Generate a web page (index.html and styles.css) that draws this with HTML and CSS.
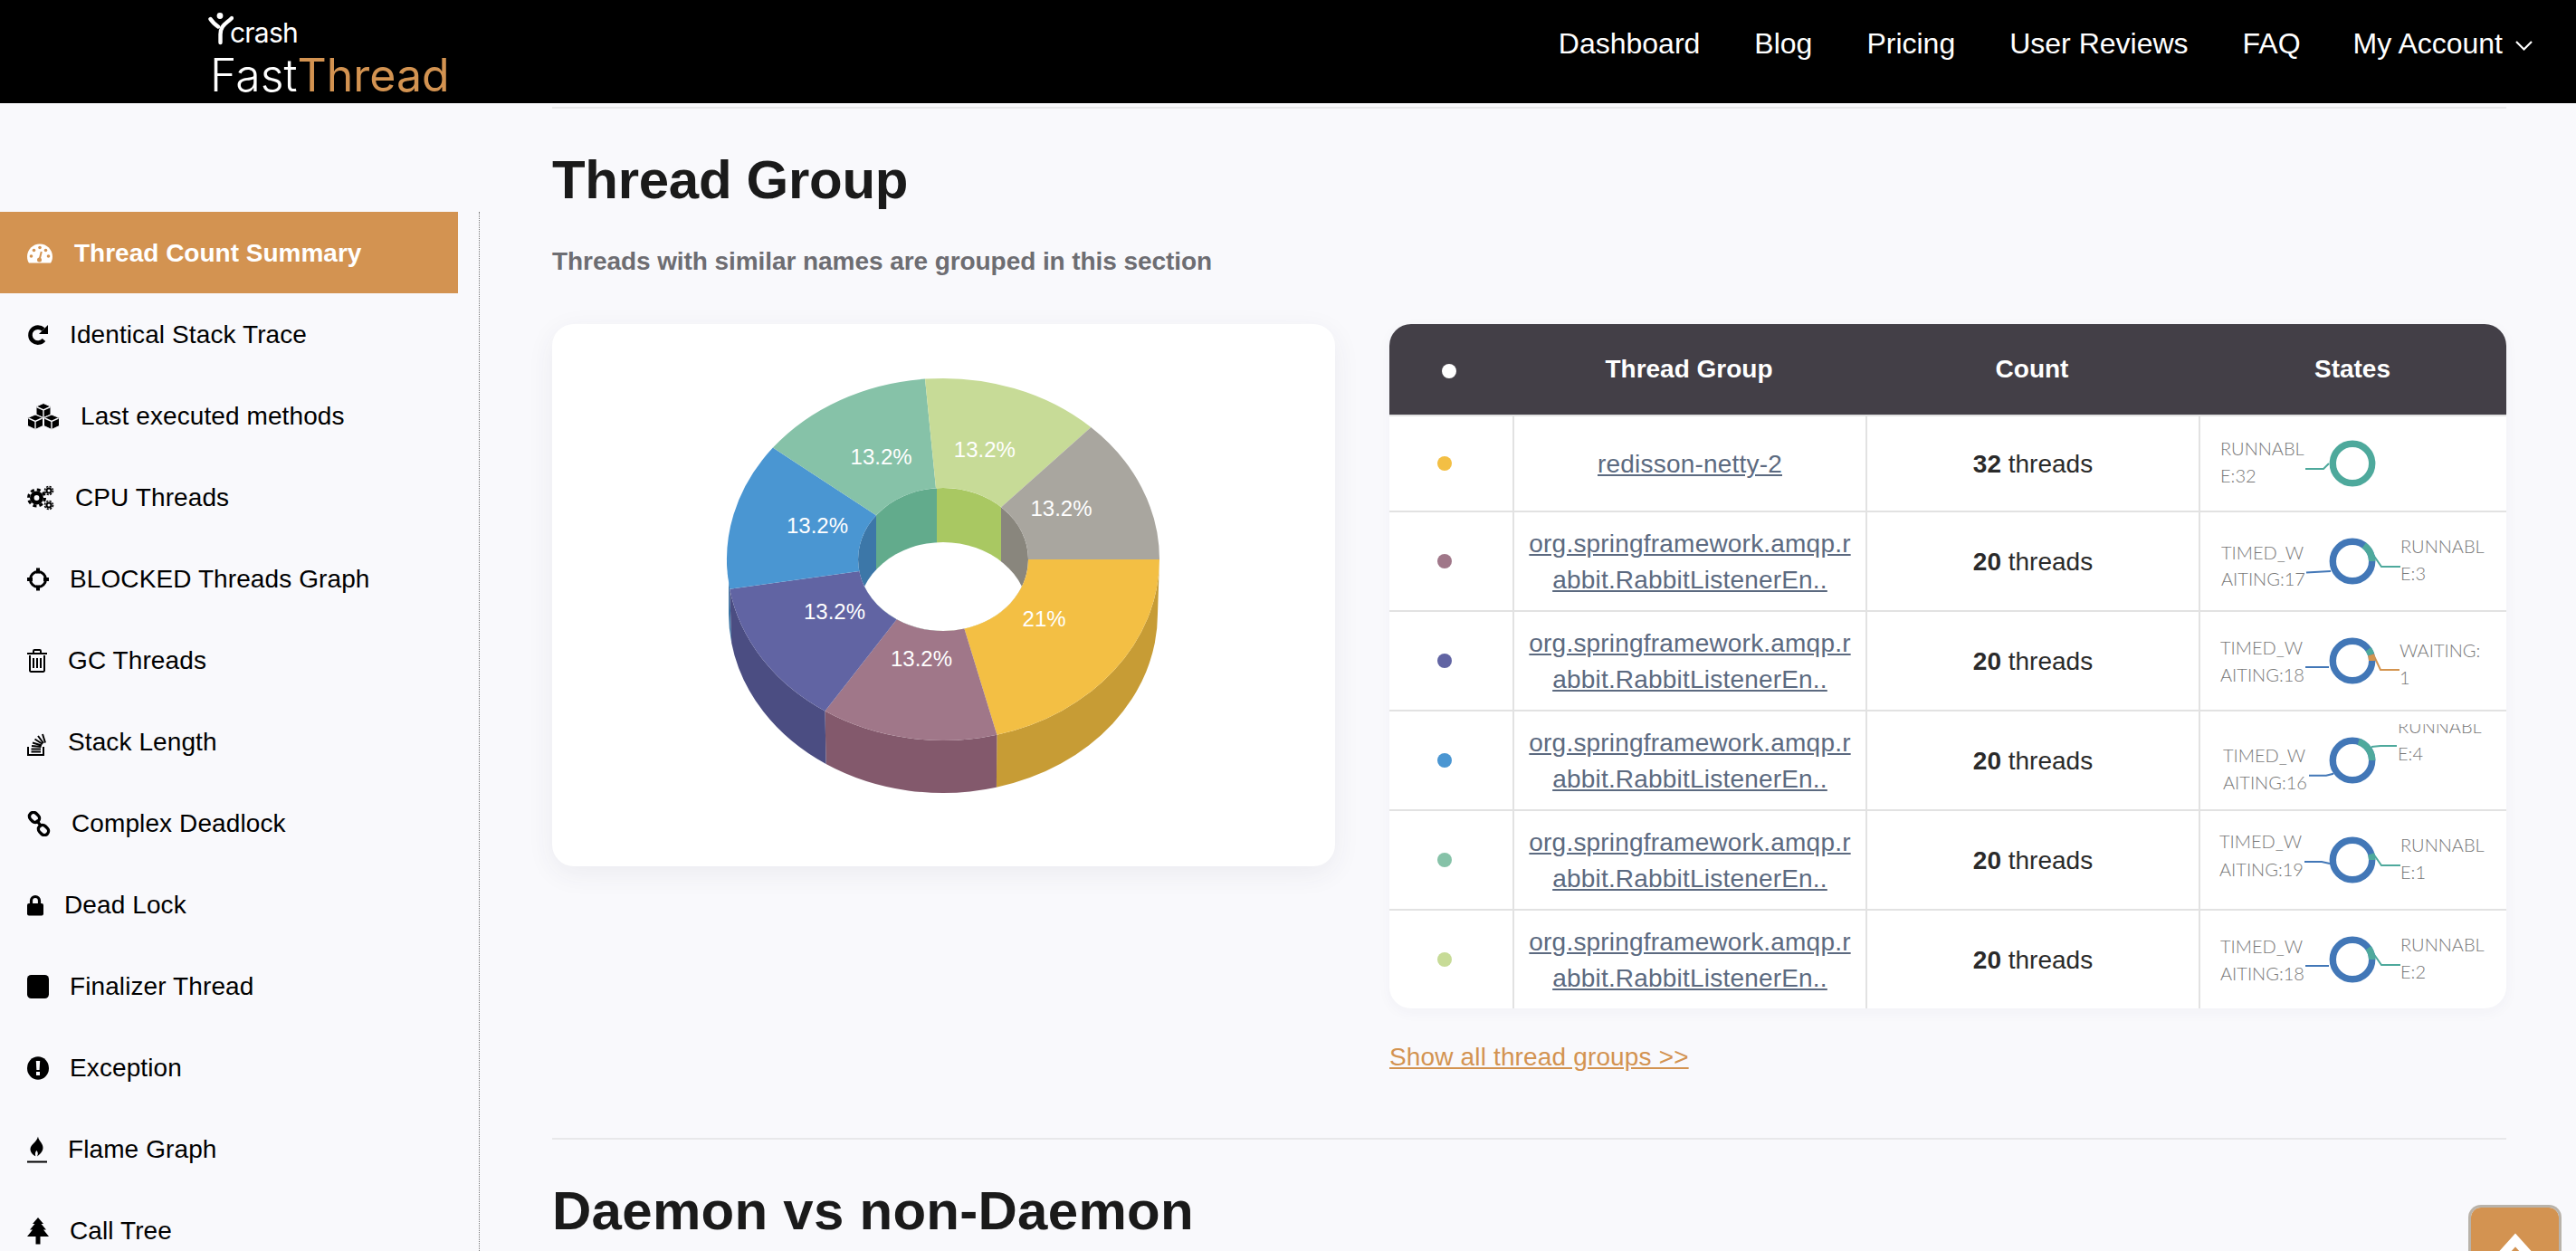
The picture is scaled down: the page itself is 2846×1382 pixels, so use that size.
FILE: index.html
```html
<!DOCTYPE html>
<html lang="en">
<head>
    <meta charset="UTF-8">
    <meta name="viewport" content="width=device-width, initial-scale=1.0">
    <title>Thread Group - FastThread</title>
    <link rel="stylesheet" href="styles.css">
</head>
<body>

    <header class="topbar">
        <a class="logo" href="#">
            <span class="logo-top">
                <svg class="logo-mark" width="28" height="36" viewBox="0 0 28 36">
                    <circle cx="13" cy="3.500" r="3.400" fill="#fff"/>
                    <path d="M2.500 7C5 11 9 14 11 15.500M26 6c-6 6-12.500 8-12.500 18v9" fill="none" stroke="#fff" stroke-width="4.400" stroke-linecap="round"/>
                </svg>
                <span class="logo-crash">crash</span>
            </span>
            <span class="logo-name">Fast<em>Thread</em></span>
        </a>
        <nav class="topnav">
            <a href="#">Dashboard</a>
            <a href="#">Blog</a>
            <a href="#">Pricing</a>
            <a href="#">User Reviews</a>
            <a href="#">FAQ</a>
            <a class="account" href="#">My Account
                <svg width="21" height="13" viewBox="0 0 21 13"><path d="M2 2l8.500 8.500L19 2" fill="none" stroke="#fff" stroke-width="2.200"/></svg>
            </a>
        </nav>
    </header>

    <div class="page">
        <aside class="sidebar">
            <ul class="side-list">
                <li><a class="side-link active" href="#">
                    <svg width="28" height="24" viewBox="0 0 28 24"><path d="M14 1.500C6.300 1.500 0 7.800 0 15.500c0 2.600.7 5 2 7h24c1.300-2 2-4.400 2-7 0-7.700-6.300-14-14-14z" fill="currentColor"/><g fill="#d39351"><circle cx="14" cy="5.500" r="1.800"/><circle cx="7.500" cy="8.500" r="1.800"/><circle cx="4.500" cy="15" r="1.800"/><circle cx="23.500" cy="15" r="1.800"/><circle cx="20.500" cy="8.500" r="1.800"/><circle cx="13.500" cy="19" r="2.500"/></g><path d="M13.500 19l2.300-9" stroke="#d39351" stroke-width="2"/></svg>
                    Thread Count Summary</a></li>
                <li><a class="side-link" href="#">
                    <svg width="24" height="24" viewBox="0 0 24 24"><path d="M18.500 17.500a8.500 8.500 0 1 1-.6-11.500" fill="none" stroke="currentColor" stroke-width="4.600"/><path d="M23 1v10h-10z" fill="currentColor"/></svg>
                    Identical Stack Trace</a></li>
                <li><a class="side-link" href="#">
                    <svg width="36" height="30" viewBox="0 0 36 30"><g fill="currentColor" stroke="#f9f9fc" stroke-width="1"><path d="M18 .5l8 3.500v9l-8 3.500-8-3.500v-9z"/><path d="M9 13l8.500 3.500v9L9 29.500.5 25.500v-9z"/><path d="M27 13l8.500 3.500v9L27 29.500l-8.500-4v-9z"/></g><path d="M10.500 4.500L18 8l7.500-3.500M18 8v8M1.500 17L9 20.500 16.500 17M9 20.500v8.500M19.500 17l7.500 3.500 7.500-3.500M27 20.500v8.500" fill="none" stroke="#f9f9fc" stroke-width="1.400"/></svg>
                    Last executed methods</a></li>
                <li><a class="side-link" href="#">
                    <svg width="30" height="30" viewBox="0 0 30 30"><g fill="none" stroke="currentColor"><circle cx="10.500" cy="15" r="5.200" stroke-width="4.600"/><circle cx="10.500" cy="15" r="9" stroke-width="3" stroke-dasharray="4 3.070"/><circle cx="24" cy="7" r="2.500" stroke-width="2"/><circle cx="24" cy="7" r="4.500" stroke-width="1.600" stroke-dasharray="2.200 1.340"/><circle cx="24" cy="23" r="2.500" stroke-width="2"/><circle cx="24" cy="23" r="4.500" stroke-width="1.600" stroke-dasharray="2.200 1.340"/></g></svg>
                    CPU Threads</a></li>
                <li><a class="side-link" href="#">
                    <svg width="24" height="26" viewBox="0 0 24 26"><circle cx="12" cy="13" r="8.500" fill="none" stroke="currentColor" stroke-width="3"/><path d="M12 .5v6M12 19.500v6M0 13h6M18 13h6" stroke="currentColor" stroke-width="4"/></svg>
                    BLOCKED Threads Graph</a></li>
                <li><a class="side-link" href="#">
                    <svg width="22" height="26" viewBox="0 0 22 26"><path d="M3 7v17a1.500 1.500 0 0 0 1.500 1h13a1.500 1.500 0 0 0 1.500-1V7M0 5h22M7 4.500V2.200C7 1.500 7.500 1 8.200 1h5.600c.7 0 1.200.5 1.200 1.200v2.300M7 10v11M11 10v11M15 10v11" fill="none" stroke="currentColor" stroke-width="2"/></svg>
                    GC Threads</a></li>
                <li><a class="side-link" href="#">
                    <svg width="22" height="30" viewBox="0 0 22 30"><path d="M1 20v9h17v-9M4.500 25.500h10.500M4.500 22.500h10.500M5 19l10.500 1M6 15.500l10 3M8.500 11.500l8.500 5.500M12 8l6 8M17 6l3 9.500" fill="none" stroke="currentColor" stroke-width="2"/></svg>
                    Stack Length</a></li>
                <li><a class="side-link" href="#">
                    <svg width="26" height="28" viewBox="0 0 26 28"><g fill="none" stroke="currentColor" stroke-width="3.400"><rect x="2" y="2.500" width="12" height="9" rx="4.500" transform="rotate(45 8 7)"/><rect x="12" y="16.500" width="12" height="9" rx="4.500" transform="rotate(45 18 21)"/><path d="M10 10l6 7"/></g></svg>
                    Complex Deadlock</a></li>
                <li><a class="side-link" href="#">
                    <svg width="18" height="24" viewBox="0 0 18 24"><path d="M4.500 11V7a4.500 4.500 0 0 1 9 0v4" fill="none" stroke="currentColor" stroke-width="3.200"/><rect y="10" width="18" height="13.500" rx="2" fill="currentColor"/></svg>
                    Dead Lock</a></li>
                <li><a class="side-link" href="#">
                    <svg width="24" height="26" viewBox="0 0 24 26"><rect width="24" height="26" rx="4.500" fill="currentColor"/></svg>
                    Finalizer Thread</a></li>
                <li><a class="side-link" href="#">
                    <svg width="24" height="26" viewBox="0 0 24 26"><ellipse cx="12" cy="13" rx="12" ry="12.800" fill="currentColor"/><path d="M9.800 5h4.400l-.6 10h-3.200z" fill="#f9f9fc"/><rect x="10" y="17" width="4" height="4" fill="#f9f9fc"/></svg>
                    Exception</a></li>
                <li><a class="side-link" href="#">
                    <svg width="22" height="30" viewBox="0 0 22 30"><path d="M12 .5c.5 5 5.500 7 5.500 12.500 0 3.800-2.800 7-6.500 9.500 1-2 1.300-4.200-.5-6.500-1.500 1.500-2 3.500-1.200 6.300C6 21 3.500 17.500 3.500 14.500c0-5 7-7.500 8.500-14z" fill="currentColor"/><rect y="27.500" width="22" height="2" fill="currentColor"/></svg>
                    Flame Graph</a></li>
                <li><a class="side-link" href="#">
                    <svg width="24" height="30" viewBox="0 0 24 30"><path d="M12 0l6 7h-2.500l5.500 6.500h-3l6 7.500H0l6-7.500H3L8.500 7H6zM9.500 21h5v8.500h-5z" fill="currentColor"/></svg>
                    Call Tree</a></li>
            </ul>
        </aside>

        <main class="content">
            <hr class="rule top-rule">
            <h1 class="section-title">Thread Group</h1>
            <p class="section-sub">Threads with similar names are grouped in this section</p>

            <div class="group-row">
                <div class="pie-card">
                    <svg class="pie" width="865" height="599" viewBox="0 0 865 599">
                        <defs>
                            <clipPath id="hole"><ellipse cx="432" cy="260" rx="94" ry="79"/></clipPath>
                        </defs>
                        <!-- outer wall -->
                        <path d="M195 260H193v4L196.200 292.700 198.200 352.200A237 198 0 0 1 195 320z" fill="#3b75a5"/>
                        <path d="M671 260A239 200 0 0 1 491.400 453.700L490.900 511.800A237 198 0 0 0 669 320z" fill="#c79c35"/>
                        <path d="M491.400 453.700A239 200 0 0 1 301.500 427.600L302.600 486A237 198 0 0 0 490.900 511.800z" fill="#83596c"/>
                        <path d="M301.500 427.600A239 200 0 0 1 196.200 292.700L198.200 352.200A237 198 0 0 0 302.600 486z" fill="#4b4d82"/>
                        <!-- inner wall seen through the hole -->
                        <g clip-path="url(#hole)">
                            <rect x="330" y="170" width="28" height="180" fill="#3c77a8"/>
                            <rect x="358" y="170" width="67" height="180" fill="#62ab8c"/>
                            <rect x="425" y="170" width="71" height="180" fill="#a9c862"/>
                            <rect x="496" y="170" width="40" height="180" fill="#89867d"/>
                            <ellipse cx="432" cy="320" rx="94" ry="79" fill="#fff"/>
                        </g>
                        <!-- top face -->
                        <path d="M671 260A239 200 0 0 1 491.400 453.700L455.400 336.500A94 79 0 0 0 526 260z" fill="#f3bf44"/>
                        <path d="M491.400 453.700A239 200 0 0 1 301.500 427.600L380.700 326.200A94 79 0 0 0 455.400 336.500z" fill="#a07789"/>
                        <path d="M301.500 427.600A239 200 0 0 1 196.200 292.700L339.300 272.900A94 79 0 0 0 380.700 326.200z" fill="#6164a3"/>
                        <path d="M196.200 292.700A239 200 0 0 1 243.900 136.600L358 211.300A94 79 0 0 0 339.300 272.900z" fill="#4a96d2"/>
                        <path d="M243.900 136.600A239 200 0 0 1 412 60.600L424 181.200A94 79 0 0 0 358 211.300z" fill="#86c2a8"/>
                        <path d="M412 60.600A239 200 0 0 1 595.300 114L496.200 202.300A94 79 0 0 0 424 181.200z" fill="#c7db97"/>
                        <path d="M595.300 114A239 200 0 0 1 671 260H526A94 79 0 0 0 496.200 202.300z" fill="#a9a69f"/>
                        <g class="pie-label">
                            <text x="363.600" y="155">13.2%</text>
                            <text x="477.900" y="147">13.2%</text>
                            <text x="562.500" y="212">13.2%</text>
                            <text x="293" y="231">13.2%</text>
                            <text x="312" y="326">13.2%</text>
                            <text x="408" y="378">13.2%</text>
                            <text x="543.600" y="334">21%</text>
                        </g>
                    </svg>
                </div>

                <div class="group-col">
                    <div class="table-wrap">
                        <table class="group-table">
                            <colgroup>
                                <col class="col-dot"><col class="col-name"><col class="col-count"><col class="col-states">
                            </colgroup>
                            <thead>
                                <tr>
                                    <th class="dot-cell head-dot"><span class="dot dot-white"></span></th>
                                    <th>Thread Group</th>
                                    <th>Count</th>
                                    <th>States</th>
                                </tr>
                            </thead>
                            <tbody>
                                <tr>
                                    <td class="dot-cell"><span class="dot dot-yellow"></span></td>
                                    <td class="text-cell"><a class="group-link" href="#">redisson-netty-2</a></td>
                                    <td class="text-cell"><b>32</b> threads</td>
                                    <td class="states">
                                        <svg width="338" height="80" viewBox="2 0 338 80">
                                            <text class="state-label" x="24" y="31">RUNNABL</text>
                                            <text class="state-label" x="24" y="61">E:32</text>
                                            <path class="lead teal" d="M118 46h20l6-6"/>
                                            <circle class="ring teal" cx="170" cy="40" r="21.700"/>
                                        </svg>
                                    </td>
                                </tr>
                                <tr>
                                    <td class="dot-cell"><span class="dot dot-mauve"></span></td>
                                    <td class="text-cell"><a class="group-link" href="#">org.springframework.amqp.r<br>abbit.RabbitListenerEn..</a></td>
                                    <td class="text-cell"><b>20</b> threads</td>
                                    <td class="states">
                                        <svg width="338" height="80" viewBox="2 0 338 80">
                                            <text class="state-label" x="25" y="38">TIMED_W</text>
                                            <text class="state-label" x="25" y="67">AITING:17</text>
                                            <text class="state-label" x="223" y="31">RUNNABL</text>
                                            <text class="state-label" x="223" y="61">E:3</text>
                                            <path class="lead blue" d="M119 52.500l27-1.500"/>
                                            <path class="lead teal" d="M191 30l11 16h21"/>
                                            <circle class="ring blue" cx="170" cy="40" r="21.700"/>
                                            <circle class="ring teal" cx="170" cy="40" r="21.700" pathLength="360" stroke-dasharray="54 306" transform="rotate(-54 170 40)"/>
                                        </svg>
                                    </td>
                                </tr>
                                <tr>
                                    <td class="dot-cell"><span class="dot dot-indigo"></span></td>
                                    <td class="text-cell"><a class="group-link" href="#">org.springframework.amqp.r<br>abbit.RabbitListenerEn..</a></td>
                                    <td class="text-cell"><b>20</b> threads</td>
                                    <td class="states">
                                        <svg width="338" height="80" viewBox="2 0 338 80">
                                            <text class="state-label" x="24" y="33">TIMED_W</text>
                                            <text class="state-label" x="24" y="63">AITING:18</text>
                                            <text class="state-label" x="222" y="36">WAITING:</text>
                                            <text class="state-label" x="222" y="66">1</text>
                                            <path class="lead blue" d="M118 47h26"/>
                                            <path class="lead orange" d="M194 35l7 15h21"/>
                                            <circle class="ring blue" cx="170" cy="40" r="21.700"/>
                                            <circle class="ring teal" cx="170" cy="40" r="21.700" pathLength="360" stroke-dasharray="18 342" transform="rotate(-36 170 40)"/>
                                            <circle class="ring orange" cx="170" cy="40" r="21.700" pathLength="360" stroke-dasharray="18 342" transform="rotate(-18 170 40)"/>
                                        </svg>
                                    </td>
                                </tr>
                                <tr>
                                    <td class="dot-cell"><span class="dot dot-blue"></span></td>
                                    <td class="text-cell"><a class="group-link" href="#">org.springframework.amqp.r<br>abbit.RabbitListenerEn..</a></td>
                                    <td class="text-cell"><b>20</b> threads</td>
                                    <td class="states">
                                        <svg width="338" height="80" viewBox="2 0 338 80">
                                            <text class="state-label" x="27" y="42">TIMED_W</text>
                                            <text class="state-label" x="27" y="72">AITING:16</text>
                                            <text class="state-label" x="220" y="10">RUNNABL</text>
                                            <text class="state-label" x="220" y="40">E:4</text>
                                            <path class="lead blue" d="M122 56.700h19l8-2"/>
                                            <path class="lead teal" d="M191 25l10-1h18"/>
                                            <circle class="ring blue" cx="170" cy="40" r="21.700"/>
                                            <circle class="ring teal" cx="170" cy="40" r="21.700" pathLength="360" stroke-dasharray="72 288" transform="rotate(-72 170 40)"/>
                                        </svg>
                                    </td>
                                </tr>
                                <tr>
                                    <td class="dot-cell"><span class="dot dot-green"></span></td>
                                    <td class="text-cell"><a class="group-link" href="#">org.springframework.amqp.r<br>abbit.RabbitListenerEn..</a></td>
                                    <td class="text-cell"><b>20</b> threads</td>
                                    <td class="states">
                                        <svg width="338" height="80" viewBox="2 0 338 80">
                                            <text class="state-label" x="23" y="27">TIMED_W</text>
                                            <text class="state-label" x="23" y="58">AITING:19</text>
                                            <text class="state-label" x="223" y="31">RUNNABL</text>
                                            <text class="state-label" x="223" y="61">E:1</text>
                                            <path class="lead blue" d="M117 42h19l9 2"/>
                                            <path class="lead teal" d="M193 33l9 13h21"/>
                                            <circle class="ring blue" cx="170" cy="40" r="21.700"/>
                                            <circle class="ring teal" cx="170" cy="40" r="21.700" pathLength="360" stroke-dasharray="18 342" transform="rotate(-18 170 40)"/>
                                        </svg>
                                    </td>
                                </tr>
                                <tr>
                                    <td class="dot-cell"><span class="dot dot-lime"></span></td>
                                    <td class="text-cell"><a class="group-link" href="#">org.springframework.amqp.r<br>abbit.RabbitListenerEn..</a></td>
                                    <td class="text-cell"><b>20</b> threads</td>
                                    <td class="states">
                                        <svg width="338" height="80" viewBox="2 0 338 80">
                                            <text class="state-label" x="24" y="33">TIMED_W</text>
                                            <text class="state-label" x="24" y="63">AITING:18</text>
                                            <text class="state-label" x="223" y="31">RUNNABL</text>
                                            <text class="state-label" x="223" y="61">E:2</text>
                                            <path class="lead blue" d="M118 47h26"/>
                                            <path class="lead teal" d="M193 33l9 13h21"/>
                                            <circle class="ring blue" cx="170" cy="40" r="21.700"/>
                                            <circle class="ring teal" cx="170" cy="40" r="21.700" pathLength="360" stroke-dasharray="36 324" transform="rotate(-36 170 40)"/>
                                        </svg>
                                    </td>
                                </tr>
                            </tbody>
                        </table>
                    </div>
                    <a class="show-all" href="#">Show all thread groups &gt;&gt;</a>
                </div>
            </div>

            <hr class="rule section-rule">
            <h2 class="section-title">Daemon vs non-Daemon</h2>
        </main>
    </div>

    <a class="to-top" href="#">
        <svg width="48" height="36" viewBox="0 0 48 36"><path d="M5 29L24 8l19 21" fill="none" stroke="#fff" stroke-width="10"/></svg>
    </a>

</body>
</html>
```

FILE: styles.css
```css
:root {
    --orange: #d39351; --bg: #f9f9fc; --line: #e2e2e2; --head: #433f47;
    --font: "Liberation Sans", Arial, sans-serif;
}
* { margin: 0; padding: 0; box-sizing: border-box; }
html, body { height: 100%; overflow: hidden; }
body { font-family: var(--font); background-color: var(--bg); color: #1a1a1a; }
a { color: inherit; }

/* top bar */
.topbar { display: flex; justify-content: space-between; height: 114px; padding: 14px 47px 0 230px; background-color: #000; color: #fff; }
.logo { display: flex; flex-direction: column; text-decoration: none; font-family: Inter, var(--font); }
.logo-top { display: flex; align-items: flex-end; height: 36px; }
.logo-mark { flex-shrink: 0; margin-right: -4px; }
.logo-crash { font-size: 30px; line-height: 28px; height: 28px; font-weight: 400; letter-spacing: -0.8px; }
.logo-name { margin: 6px 0 0 2px; font-size: 50px; line-height: 54px; font-weight: 300; letter-spacing: 0; }
.logo-name em { font-style: normal; color: var(--orange); font-weight: 400; }
.topnav { display: flex; gap: 60px; padding-top: 16px; font-size: 32px; }
.topnav a { text-decoration: none; }
.topnav .account { display: flex; align-items: center; gap: 13px; height: 37px; margin-left: -2px; }
.account svg { margin-top: 3px; }

/* sidebar + main column */
.page { display: flex; height: calc(100% - 114px); }
.sidebar { flex: 0 0 530px; margin-top: 120px; padding-right: 23px; border-right: 1px dotted #777; }
.side-list { list-style: none; }
.side-link { display: flex; align-items: center; gap: 23px; height: 90px; padding: 1px 0 0 30px; font-size: 28px; letter-spacing: 0.1px; color: #000; text-decoration: none; }
.side-link svg { flex-shrink: 0; }
.side-link.active { background-color: var(--orange); color: #fff; font-weight: 700; gap: 24px; letter-spacing: 0; }

.content { flex: 1; padding: 4px 77px 0 80px; }
.rule { border: none; height: 2px; background-color: #e8e8ea; }
.section-title { font-size: 60px; line-height: 72px; font-weight: 700; color: #1a1a1a; }
h1.section-title { margin-top: 43px; letter-spacing: -0.3px; }
h2.section-title { margin-top: 43px; letter-spacing: 0.27px; }
.section-sub { margin-top: 34px; font-size: 28px; line-height: 40px; font-weight: 700; color: #6d6d72; letter-spacing: -0.07px; }
.section-rule { margin-top: 69px; }

.group-row { display: grid; grid-template-columns: 865px 1234px; gap: 60px; margin-top: 49px; align-items: start; }

/* pie */
.pie-card { height: 599px; border-radius: 24px; background-color: #fff; box-shadow: 0 8px 30px rgba(60, 60, 90, 0.07); }
.pie { display: block; }
.pie-label text { font-size: 24px; fill: #fff; text-anchor: middle; }

/* table */
.table-wrap { border-radius: 24px; overflow: hidden; background-color: #fff; box-shadow: 0 4px 16px rgba(60, 60, 90, 0.04); }
.group-table { width: 1234px; table-layout: fixed; border-collapse: separate; border-spacing: 0; font-size: 28px; text-align: center; color: #2a2a2a; }
.col-dot { width: 136px; }
.col-name { width: 390px; }
.col-count { width: 368px; }
.col-states { width: 340px; }
.group-table th { height: 102px; background-color: var(--head); color: #fff; font-weight: 700; border-bottom: 2px solid var(--line); }
.group-table td { height: 110px; border-bottom: 2px solid var(--line); border-left: 2px solid var(--line); line-height: 40px; }
.group-table tbody tr:first-child td { height: 106px; }
.group-table tbody tr:last-child td { height: 108px; border-bottom: none; }
.group-table td.dot-cell { border-left: none; padding-right: 14px; }
.group-table td.text-cell { padding-top: 2px; }
.group-table th.head-dot { padding-right: 4px; }
.group-link { color: #5c6a80; letter-spacing: 0.2px; }
.dot { display: inline-block; width: 16px; height: 16px; border-radius: 50%; vertical-align: middle; }
td .dot { margin-bottom: 4px; }
.dot-white { background-color: #fff; }
.dot-yellow { background-color: #f3bf44; }
.dot-mauve { background-color: #a07789; }
.dot-indigo { background-color: #6164a3; }
.dot-blue { background-color: #4a96d2; }
.dot-green { background-color: #86c2a8; }
.dot-lime { background-color: #c7db97; }

/* small donuts */
.states svg { display: block; }
.state-label { font-family: Lato, var(--font); font-size: 20px; font-weight: 300; fill: #777; }
.lead { fill: none; stroke-width: 2; }
.ring { fill: none; stroke-width: 7.4; }
.lead.teal, .ring.teal { stroke: #4ea99c; }
.lead.blue, .ring.blue { stroke: #4277b7; }
.lead.orange, .ring.orange { stroke: #d4944f; }

.show-all { display: inline-block; margin-top: 34px; font-size: 28px; line-height: 40px; color: var(--orange); letter-spacing: 0.15px; }

.to-top { position: fixed; left: 2727px; top: 1331px; display: flex; justify-content: center; width: 103px; height: 110px; padding-top: 28px; border: 3px solid #b9b3aa; border-bottom: none; border-radius: 14px 14px 0 0; background-color: var(--orange); background-clip: padding-box; }
```
